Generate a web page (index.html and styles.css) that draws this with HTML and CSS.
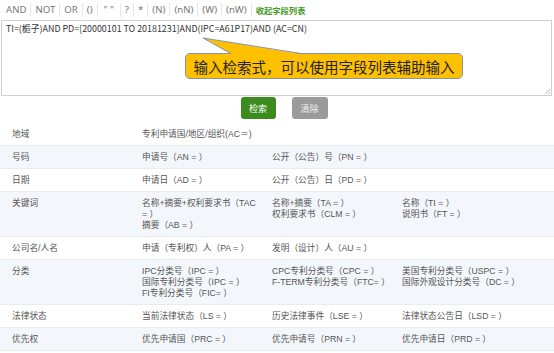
FILE: index.html
```html
<!DOCTYPE html>
<html lang="zh">
<head>
<meta charset="utf-8">
<link rel="stylesheet" href="styles.css">
</head>
<body>
<div class="toolbar">
  <span class="op">AND</span><span class="op">NOT</span><span class="op">OR</span><span class="op">()</span><span class="op wide">" "</span><span class="op">?</span><span class="op">*</span><span class="op">(N)</span><span class="op">(nN)</span><span class="op">(W)</span><span class="op">(nW)</span><span class="toggle">收起字段列表</span>
</div>
<div class="editor">
  <div class="query">TI=(栀子)AND PD=[20000101 TO 20181231]AND(IPC=A61P17)AND (AC=CN)</div>
  <svg class="grip" width="6" height="6" viewBox="0 0 6 6"><path d="M1 6 L6 1 M4 6 L6 4" stroke="#aaa" stroke-width="0.8"/></svg>
  <div class="callout">
    <svg class="pointer" width="104" height="18" viewBox="0 0 104 18"><polygon points="2,1 30,17 100,17" fill="#ffc000"/><path d="M30,16.5 L2,1 L100,16.5" fill="none" stroke="#8494a8" stroke-width="1"/></svg>
    <span>输入检索式，可以使用字段列表辅助输入</span>
  </div>
</div>
<div class="actions">
  <button class="btn search">检索</button>
  <button class="btn clear">清除</button>
</div>
<div class="fields">
  <div class="row">
    <div class="label">地域</div>
    <div class="cell">专利申请国/地区/组织(AC＝)</div>
    <div class="cell"></div><div class="cell"></div>
  </div>
  <div class="row alt">
    <div class="label">号码</div>
    <div class="cell">申请号（AN = ）</div>
    <div class="cell">公开（公告）号（PN = ）</div>
    <div class="cell"></div>
  </div>
  <div class="row">
    <div class="label">日期</div>
    <div class="cell">申请日（AD = ）</div>
    <div class="cell">公开（公告）日（PD = ）</div>
    <div class="cell"></div>
  </div>
  <div class="row alt">
    <div class="label">关键词</div>
    <div class="cell">名称+摘要+权利要求书（TAC<br>= ）<br>摘要（AB = ）</div>
    <div class="cell">名称+摘要（TA = ）<br>权利要求书（CLM = ）</div>
    <div class="cell">名称（TI = ）<br>说明书（FT = ）</div>
  </div>
  <div class="row">
    <div class="label">公司名/人名</div>
    <div class="cell">申请（专利权）人（PA = ）</div>
    <div class="cell">发明（设计）人（AU = ）</div>
    <div class="cell"></div>
  </div>
  <div class="row alt">
    <div class="label">分类</div>
    <div class="cell">IPC分类号（IPC = ）<br>国际专利分类号（IPC = ）<br>FI专利分类号（FIC= ）</div>
    <div class="cell">CPC专利分类号（CPC = ）<br>F-TERM专利分类号（FTC= ）</div>
    <div class="cell">美国专利分类号（USPC = ）<br>国际外观设计分类号（DC = ）</div>
  </div>
  <div class="row">
    <div class="label">法律状态</div>
    <div class="cell">当前法律状态（LS = ）</div>
    <div class="cell">历史法律事件（LSE = ）</div>
    <div class="cell">法律状态公告日（LSD = ）</div>
  </div>
  <div class="row alt last">
    <div class="label">优先权</div>
    <div class="cell">优先申请国（PRC = ）</div>
    <div class="cell">优先申请号（PRN = ）</div>
    <div class="cell">优先申请日（PRD = ）</div>
  </div>
</div>
</body>
</html>
```

FILE: styles.css
```css
* { box-sizing: border-box; }
body {
  margin: 0;
  background: #fff;
  font-family: "Noto Sans CJK SC", "Noto Sans", sans-serif;
  color: #555;
  font-size: 9px;
  width: 554px;
  height: 353px;
  overflow: hidden;
}
.toolbar {
  display: flex;
  align-items: center;
  height: 20px;
  padding-left: 2px;
  font-family: "Noto Sans", "Noto Sans CJK SC", sans-serif;
  font-size: 9.6px;
  color: #777;
}
.op {
  padding: 0 4px;
  line-height: 14px;
  border-right: 1px solid #e6e6e6;
}
.op.wide { padding: 0 6px; }
.toggle {
  padding-left: 4px;
  color: #3f9a1c;
  font-family: "Noto Sans CJK SC", sans-serif;
  font-weight: bold;
  font-size: 8.3px;
}
.editor {
  position: relative;
  margin-left: 1px;
  width: 551px;
  height: 76px;
  border: 1px solid #cfcfcf;
  padding: 2px 4px;
}
.query {
  font-size: 8.9px;
  line-height: 12px;
  color: #333;
}
.grip { position: absolute; right: 1px; bottom: 1px; }
.callout {
  position: absolute;
  left: 183px;
  top: 32px;
  width: 278px;
  height: 26px;
  background: #ffc000;
  border: 1px solid #8494a8;
  border-radius: 5px;
  display: flex;
  align-items: center;
  justify-content: center;
  font-size: 14.5px;
  color: #222;
}
.pointer {
  position: absolute;
  left: 15px;
  top: -17px;
}
.actions {
  display: flex;
  justify-content: center;
  gap: 16px;
  padding-left: 14px;
  margin-top: 1px;
  height: 25px;
}
.btn {
  height: 22px;
  border: none;
  border-radius: 3px;
  font-family: inherit;
  font-size: 9px;
  padding: 0;
}
.search { width: 35px; background: #3b8c1d; color: #fff; }
.clear { width: 36px; background: #9b9b9b; color: #eee; }
.row {
  display: grid;
  grid-template-columns: 130px 130px 130px 1fr;
  padding: 6px 0 5px 12px;
  font-family: "Liberation Sans", "Noto Sans CJK SC", sans-serif;
  font-size: 8.7px;
  line-height: 11px;
  border-top: 1px solid #e9ecef;
  color: #555;
}
.row:first-child { border-top-color: #fff; }
.row.alt { background: #f3f7fb; }
.row.last { border-bottom: 1px solid #e9ecef; }
.cell, .label { white-space: nowrap; }
```
